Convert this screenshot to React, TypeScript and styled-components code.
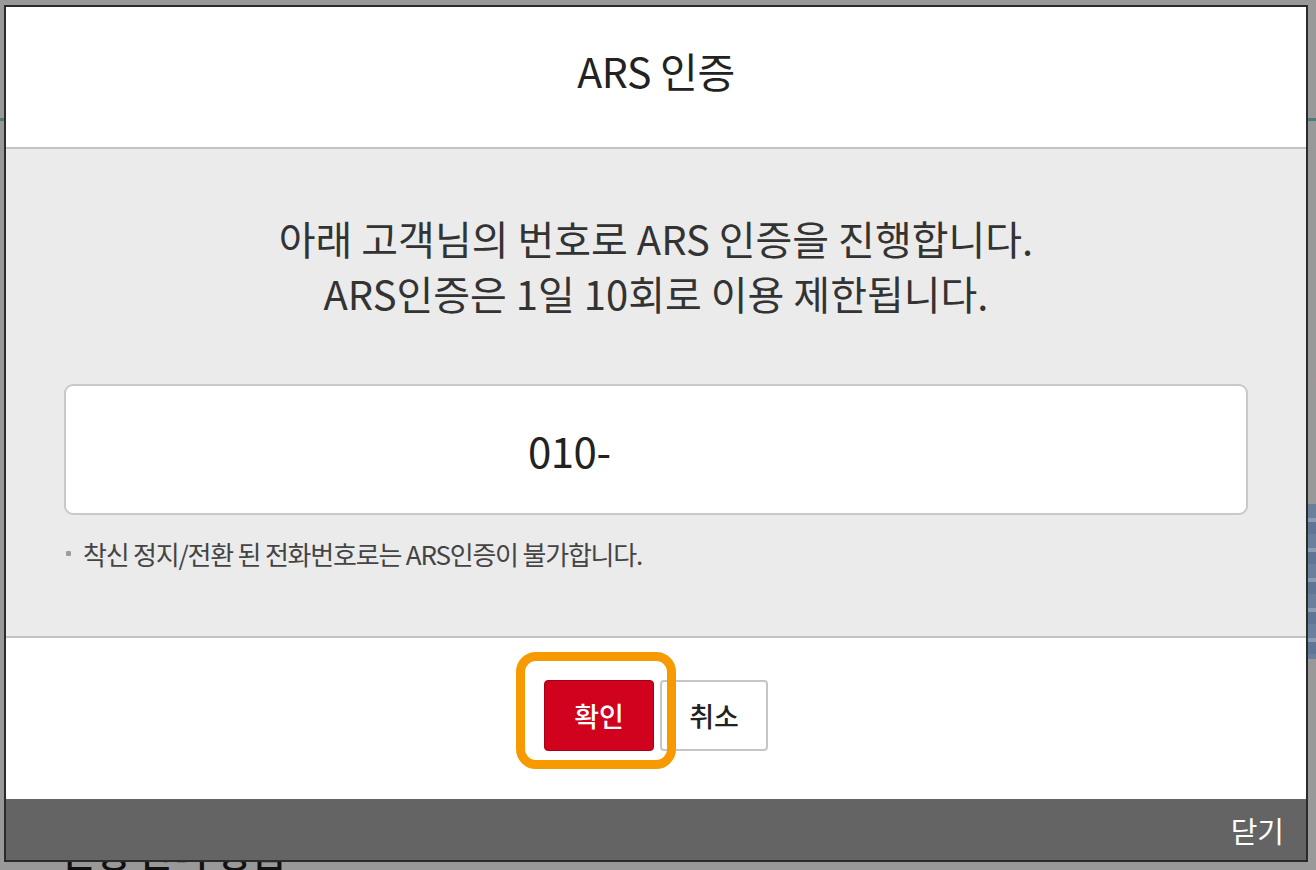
import React from 'react'
import styled, { createGlobalStyle } from 'styled-components'

const GlobalStyle = createGlobalStyle`
  html, body {
    margin: 0;
    padding: 0;
    background: #999999;
    font-family: 'Noto Sans CJK KR', 'Noto Sans', sans-serif;
    overflow: hidden;
  }
  * { box-sizing: border-box; }
`

const Page = styled.div`
  position: relative;
  width: 1316px;
  height: 870px;
  overflow: hidden;
  display: flex;
  flex-direction: column;
`

const PageRule = styled.div<{ $top: number; $color: string; $h: number }>`
  margin-top: ${p => p.$top}px;
  height: ${p => p.$h}px;
  background: ${p => p.$color};
`

const BannerRow = styled.div`
  margin-top: 123px;
  height: 185px;
  display: flex;
  justify-content: flex-end;
`

const Banner = styled.div`
  width: 8px;
  background: repeating-linear-gradient(180deg, #6a7f9c 0 14px, #8c9bb0 14px 18px, #5f7596 18px 30px);
`

const PageHeading = styled.h2`
  margin: 173px 0 0 60px;
  font-size: 38px;
  font-weight: 500;
  color: #111;
  line-height: 1;
  white-space: nowrap;
`

const Modal = styled.div`
  position: absolute;
  left: 4px;
  top: 5px;
  width: 1304px;
  height: 857px;
  border: 2px solid #2b2b2b;
  background: #fff;
  display: flex;
  flex-direction: column;
`

const Header = styled.div`
  height: 142px;
  border-bottom: 2px solid #c3c3c3;
  display: flex;
  align-items: center;
  justify-content: center;
`

const Title = styled.h1`
  margin: 0 0 14px;
  font-size: 41px;
  font-weight: 400;
  color: #222;
  letter-spacing: -0.3px;
`

const Body = styled.div`
  height: 489px;
  background: #ebebeb;
  border-bottom: 2px solid #c3c3c3;
  padding: 62px 58px 0;
  display: flex;
  flex-direction: column;
`

const Message = styled.p`
  margin: 0;
  text-align: center;
  font-size: 40px;
  line-height: 55px;
  color: #333;
`

const PhoneInput = styled.div`
  margin-top: 63px;
  height: 131px;
  background: #fff;
  border: 2px solid #c9c9c9;
  border-radius: 9px;
  display: flex;
  align-items: center;
  padding-left: 462px;
  font-size: 42px;
  color: #222;
  letter-spacing: -0.5px;
`

const Note = styled.p`
  margin: 20px 0 0 2px;
  display: flex;
  align-items: center;
  font-size: 26px;
  color: #444;
  letter-spacing: -1.2px;
`

const Bullet = styled.span`
  width: 5px;
  height: 5px;
  background: #9d9d9d;
  border-radius: 1px;
  margin-right: 12px;
`

const Footer = styled.div`
  flex: 1;
  display: flex;
  align-items: center;
  justify-content: center;
  gap: 6px;
  padding-bottom: 6px;
`

const ButtonSlot = styled.div`
  position: relative;
  display: flex;
`

const Button = styled.button<{ $primary?: boolean }>`
  height: 71px;
  width: ${p => (p.$primary ? 110 : 108)}px;
  border-radius: 4px;
  border: ${p => (p.$primary ? '1px solid #a50015' : '2px solid #c6c6c6')};
  background: ${p => (p.$primary ? '#d0021e' : '#fff')};
  color: ${p => (p.$primary ? '#fff' : '#222')};
  font-family: inherit;
  font-size: 27px;
  font-weight: 500;
  padding: 0;
`

const FocusRing = styled.span`
  position: absolute;
  left: -28px;
  top: -28px;
  width: 160px;
  height: 117px;
  border: 9px solid #f79a00;
  border-radius: 20px;
  pointer-events: none;
`

const CloseBar = styled.div`
  height: 61px;
  background: #646464;
  display: flex;
  align-items: center;
  justify-content: flex-end;
  padding-right: 22px;
  color: #fff;
  font-size: 29px;
`

export default function App() {
  return (
    <>
      <GlobalStyle />
      <Page>
        <PageRule $top={118} $h={3} $color="#4b7d7b" />
        <PageRule $top={82} $h={2} $color="#a3939b" />
        <PageRule $top={175} $h={2} $color="#a3939b" />
        <BannerRow>
          <Banner />
        </BannerRow>
        <PageHeading>신청 관리 상품</PageHeading>

        <Modal>
          <Header>
            <Title>ARS 인증</Title>
          </Header>
          <Body>
            <Message>
              아래 고객님의 번호로 ARS 인증을 진행합니다.
              <br />
              ARS인증은 1일 10회로 이용 제한됩니다.
            </Message>
            <PhoneInput>010-</PhoneInput>
            <Note>
              <Bullet />
              착신 정지/전환 된 전화번호로는 ARS인증이 불가합니다.
            </Note>
          </Body>
          <Footer>
            <ButtonSlot>
              <Button $primary>확인</Button>
              <FocusRing />
            </ButtonSlot>
            <Button>취소</Button>
          </Footer>
          <CloseBar>닫기</CloseBar>
        </Modal>
      </Page>
    </>
  )
}
